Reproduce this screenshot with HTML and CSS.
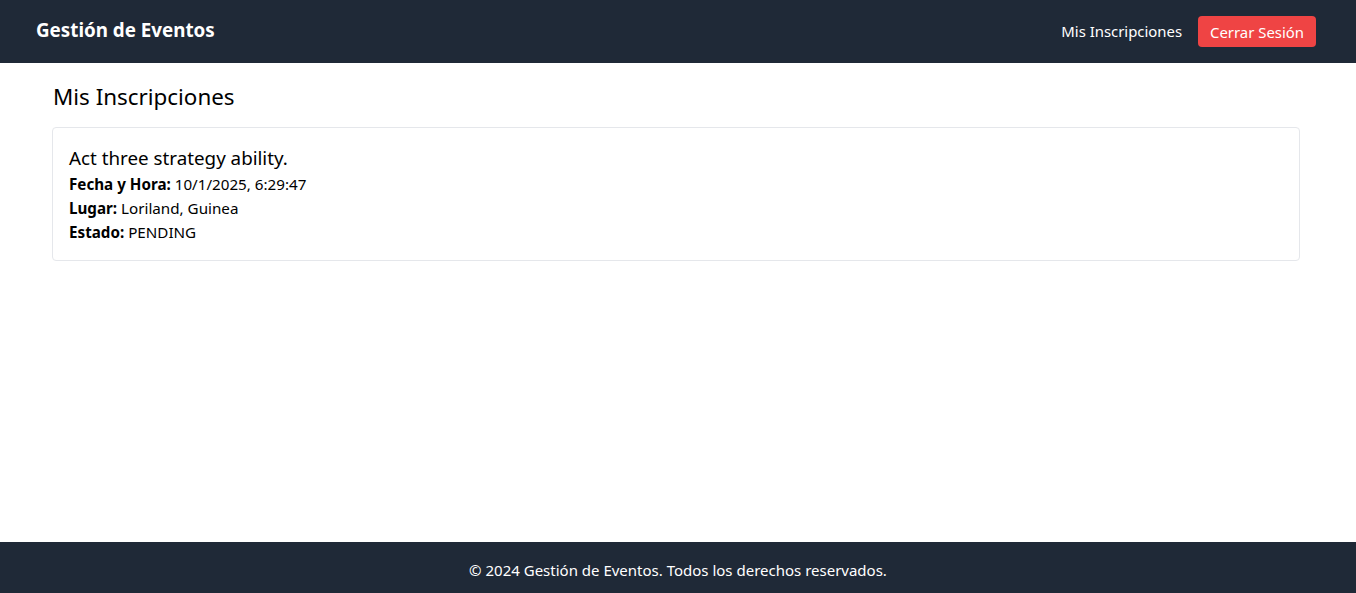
FILE: index.html
```html
<!DOCTYPE html>
<html lang="es">
<head>
<meta charset="utf-8">
<title>Gestión de Eventos</title>
<link rel="stylesheet" href="styles.css">
</head>
<body>
<div class="page">
  <header class="topbar">
    <div class="topbar-inner">
      <a class="brand" href="#">Gestión de Eventos</a>
      <nav class="nav">
        <a class="nav-link" href="#">Mis Inscripciones</a>
        <button class="btn-logout" type="button">Cerrar Sesión</button>
      </nav>
    </div>
  </header>
  <main class="main">
    <h1 class="page-title">Mis Inscripciones</h1>
    <div class="card">
      <h2 class="card-title">Act three strategy ability.</h2>
      <p class="row"><strong>Fecha y Hora:</strong> 10/1/2025, 6:29:47</p>
      <p class="row"><strong>Lugar:</strong> Loriland, Guinea</p>
      <p class="row"><strong>Estado:</strong> PENDING</p>
    </div>
  </main>
  <footer class="footer">
    <p>© 2024 Gestión de Eventos. Todos los derechos reservados.</p>
  </footer>
</div>
</body>
</html>
```

FILE: styles.css
```css
* { box-sizing: border-box; }
html, body { margin: 0; padding: 0; }
body {
  font-family: "Noto Sans", "Open Sans", sans-serif;
  color: #000;
  background: #fff;
  font-size: 15px;
  line-height: 24px;
}
.page {
  min-height: 100vh;
  display: flex;
  flex-direction: column;
}
.topbar {
  background: #1f2937;
  color: #fff;
}
.topbar-inner {
  height: 63px;
  padding: 0 40px 0 36px;
  display: flex;
  align-items: center;
  justify-content: space-between;
}
.brand {
  color: #fff;
  text-decoration: none;
  font-weight: 700;
  font-size: 18.8px;
  line-height: 28px;
  margin-bottom: 3px;
}
.nav {
  display: flex;
  align-items: center;
  gap: 16px;
  margin-bottom: 1px;
}
.nav-link {
  color: #fff;
  text-decoration: none;
  font-size: 14.9px;
}
.btn-logout {
  font-family: inherit;
  font-size: 14.9px;
  line-height: 24px;
  color: #fff;
  background: #ef4444;
  border: 0;
  border-radius: 4px;
  padding: 4px 12px 3px;
  cursor: pointer;
}
.main {
  flex: 1;
  padding: 18px 56px 16px 52px;
}
.page-title {
  margin: 0 0 14px 1px;
  font-size: 22.4px;
  line-height: 32px;
  font-weight: 400;
}
.card {
  border: 1px solid #e5e7eb;
  border-radius: 4px;
  padding: 16px;
}
.card-title {
  margin: 0;
  font-size: 18.8px;
  line-height: 28px;
  font-weight: 400;
}
.row {
  margin: 0;
  font-size: 15.2px;
}
.footer {
  background: #1f2937;
  color: #fff;
  text-align: center;
  padding: 16px 0 11px;
  font-size: 15px;
}
.footer p { margin: 0; }
```
